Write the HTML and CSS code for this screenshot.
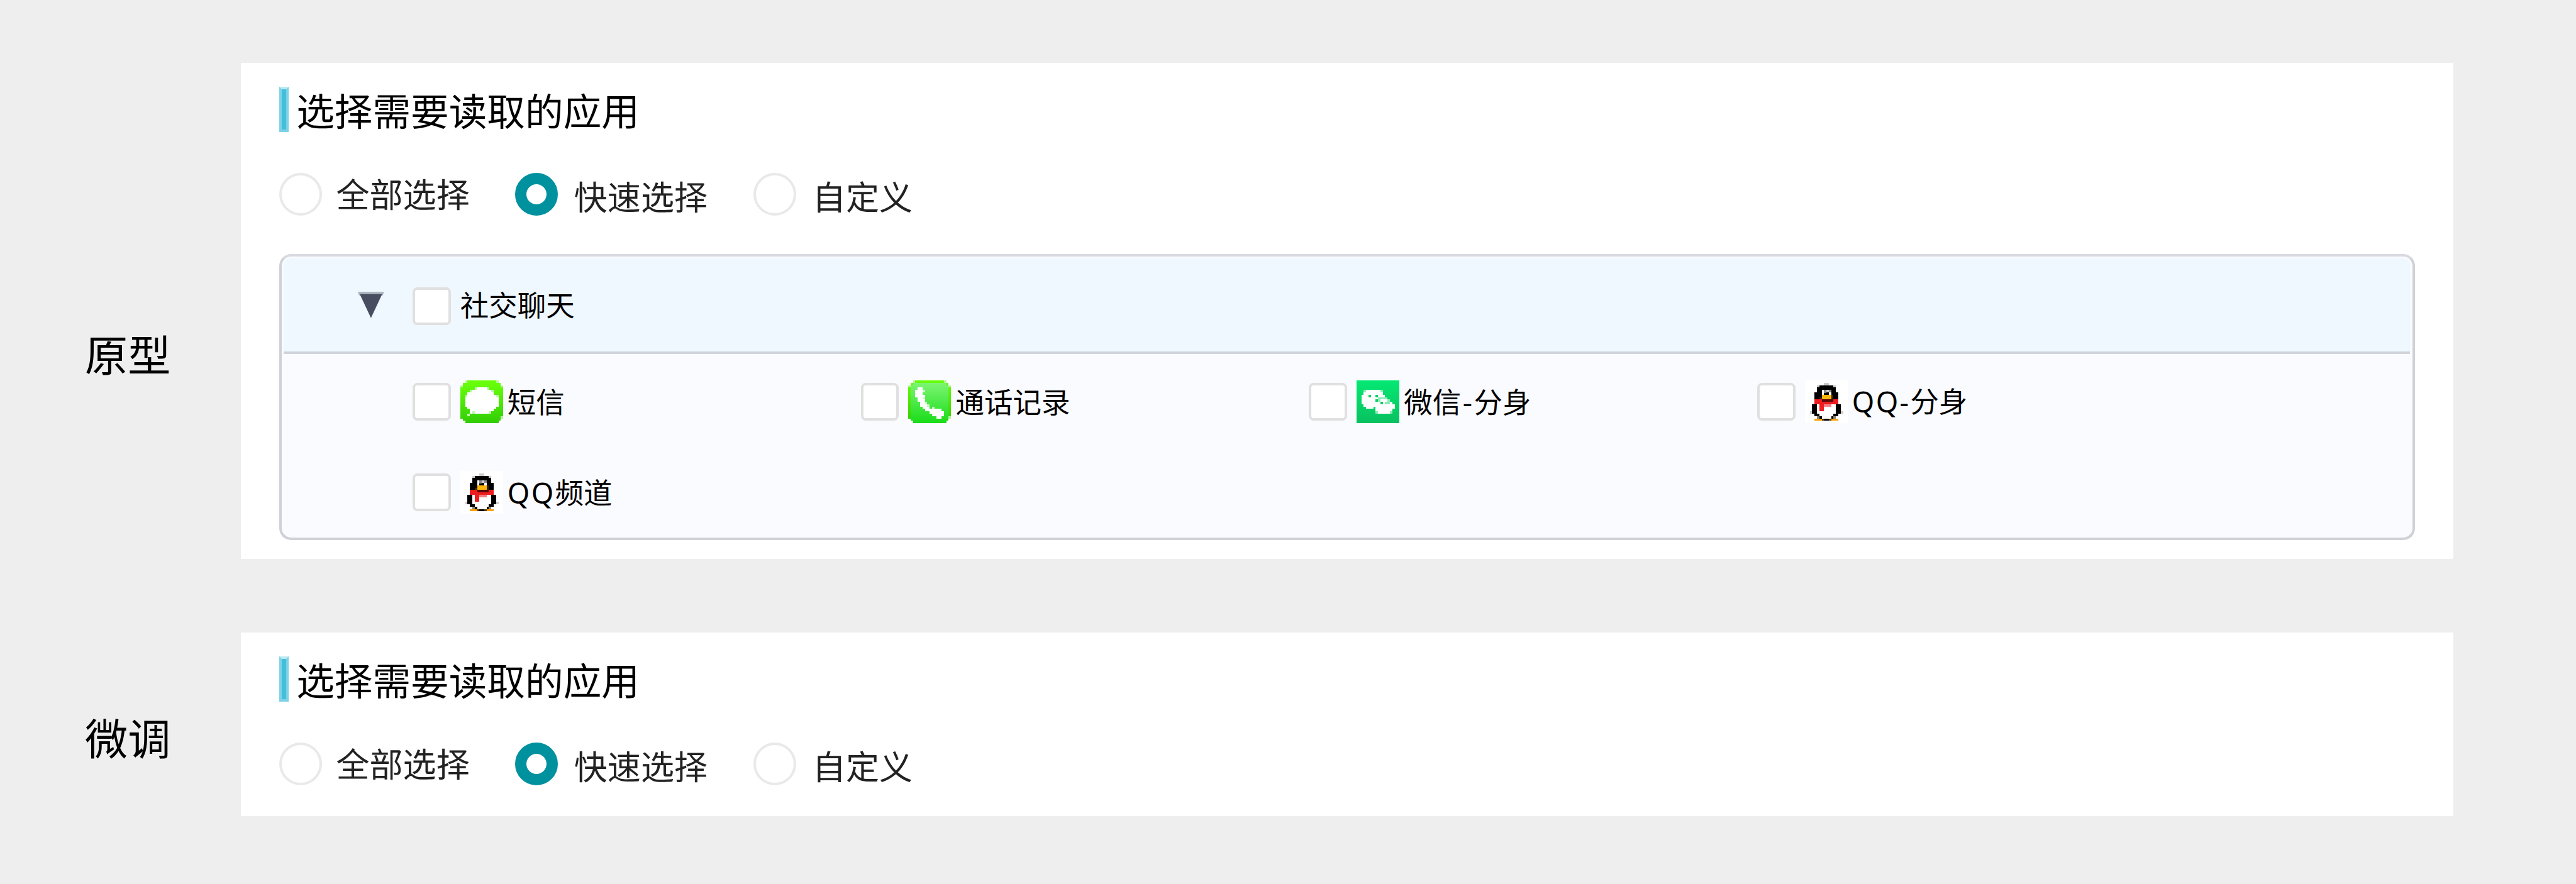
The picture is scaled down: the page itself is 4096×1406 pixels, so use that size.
FILE: index.html
```html
<!DOCTYPE html>
<html lang="zh-CN">
<head>
  <meta charset="UTF-8">
  <meta name="viewport" content="width=device-width, initial-scale=1.0">
  <title>选择需要读取的应用</title>
  <link rel="stylesheet" href="styles.css">
</head>
<body>
<svg class="symbols" aria-hidden="true">
  <symbol id="qq" viewBox="0 0 18 18">
    <path fill="#fff" d="M0 0h18v18H0z"/>
    <path fill="#ccc" d="M8 1h2v1H8zM2 13h1v1H2zM15 13h1v1h-1zM5 3h1v-1H5zM12 2h1v1h-1z"/>
    <path fill="#000" d="M6 2h6v1h1v2h1v3H4V5h1V3h1zM4 10h1v4h1v1h1v1H5v-1H4v-1H3v-4zM13 10h2v4h-1v1h-1v1h-2v-1h1v-1h1zM7 16h4v1H7z"/>
    <path fill="#fff" d="M7 4h1v2H7zM10 5h1v1h-1z"/>
    <path fill="#888" d="M8 4h1v1H8zM10 4h1v1h-1zM9 5h-1v.4h1z"/>
    <path fill="#ccc" d="M9 4h1v1H9z"/>
    <path fill="#fdb60d" d="M7 6h4v2H7z"/>
    <path fill="#3a2605" d="M6 7h1v1H6zM11 6h1v2h-1z"/>
    <path fill="#ec1c1f" d="M4 8h10v2H4zM6 10h2v3H6z"/>
    <path fill="#5a0808" d="M7 8h5v1H7z"/>
    <path fill="#f47f82" d="M8 10h3v1H8z"/>
    <path fill="#8a8270" d="M5 15h1v1H5zM12 15h1v1h-1z"/>
    <path fill="#fca00a" d="M4 16h3v1H4zM11 16h3v1h-3z"/>
    <path fill="#5c3a06" d="M7 16h1v1H7zM10 16h1v1h-1z"/>
  </symbol>
</svg>

<section class="row row-full">
  <h2 class="row-name">原型</h2>
  <div class="panel">
    <h1 class="title">选择需要读取的应用</h1>
    <div class="modes">
      <label class="mode"><input type="radio" name="mode1"><span>全部选择</span></label>
      <label class="mode lower"><input type="radio" name="mode1" checked><span>快速选择</span></label>
      <label class="mode lower"><input type="radio" name="mode1"><span>自定义</span></label>
    </div>
    <div class="group">
      <div class="group-header">
        <svg class="arrow" viewBox="0 0 11 11"><path fill="#adb7c0" d="M0 0h11l-.5 1.5H.5z"/><path fill="#484d60" d="M.8 1h9.4L5.5 11z"/></svg>
        <label class="check"><input type="checkbox"><span>社交聊天</span></label>
      </div>
      <div class="apps">
        <label class="app">
          <input type="checkbox">
          <svg class="icon" viewBox="0 0 18 18">
            <defs>
              <linearGradient id="sms" x1="0" y1="0" x2="0" y2="1"><stop offset="0.05" stop-color="#69ff0a"/><stop offset="1" stop-color="#30cd05"/></linearGradient>
            </defs>
            <path fill="#fff" d="M0 0h18v18H0z"/>
            <path fill="#b5f59a" d="M2 0h14v1h1v1h1v14h-1v1h-1v1H2v-1H1v-1H0V2h1V1h1z"/>
            <path fill="url(#sms)" d="M3 0h12v1h2v2h1v12h-1v2h-1v1H2v-1H1v-1H0V3h1V1h2z"/>
            <path fill="#c2f5b0" d="M6 3h6v1H6zM4 4h10v1H4zM2 6h14v1H2zM5 13h8v1H5zM3 14h1v1H3z"/>
            <path fill="#fff" d="M7 3h4v1h2v1h1v1h1v1h1v4h-1v1h-1v1h-2v1H6v-1H5v1H4v-2H3v-1H2V7h1V5h2V4h2z"/>
          </svg>
          <span>短信</span>
        </label>
        <label class="app">
          <input type="checkbox">
          <svg class="icon" viewBox="0 0 18 18">
            <defs>
              <linearGradient id="edge" x1="0" y1="0" x2="0" y2="1"><stop offset="0" stop-color="#69ff0a"/><stop offset="1" stop-color="#30cd05"/></linearGradient>
              <linearGradient id="call" x1="0" y1="0" x2="0" y2="1"><stop offset="0" stop-color="#7df573"/><stop offset="1" stop-color="#18dc18"/></linearGradient>
            </defs>
            <path fill="#fff" d="M0 0h18v18H0z"/>
            <path fill="#b5f59a" d="M2 0h14v1h1v1h1v14h-1v1h-1v1H2v-1H1v-1H0V2h1V1h1z"/>
            <path fill="url(#edge)" d="M3 0h12v1h2v2h1v12h-1v2h-1v1H2v-1H1v-1H0V3h1V1h2z"/>
            <path fill="url(#call)" d="M2 1h14v1h1v14h-1v2H2v-1H1V2h1z"/>
            <path fill="#c8f7c5" d="M6 4h1v1H6zM6 7h1v1H6zM4 8h1v1H4zM7 9h1v1H7zM8 10h1v1H8zM10 11h1v1h-1zM11 14h1v1h-1z"/>
            <path fill="#fff" d="M4 3h2v3h1v1h-1v1h1v1h0v1h1v1h1v1h1v0h3v0h1v1h1v2h-1v1h-2v-1h-2v-1H9v-1H7v-1H6v-1H5V9H4V7H3V4h1z"/>
          </svg>
          <span>通话记录</span>
        </label>
        <label class="app">
          <input type="checkbox">
          <svg class="icon" viewBox="0 0 18 18">
            <defs>
              <linearGradient id="wx" x1="0" y1="0" x2="0" y2="1"><stop offset="0" stop-color="#04e872"/><stop offset="1" stop-color="#09c160"/></linearGradient>
            </defs>
            <path fill="url(#wx)" d="M0 0h18v18H0z"/>
            <path fill="#8eebb6" d="M3 4h8v2h1v1h1v1H2V6h1zM8 8h6v1h1v1H8zM3 10h1v1H3zM8 12h1v2H8zM14 13h1v1h-1z"/>
            <path fill="#fff" d="M4 4h6v1h1v1h1v1h-3v1H8v3H7v1H4v-1H3v-1H2V6h1V5h1z"/>
            <path fill="#fff" d="M10 8h3v1h2v1h1v2h-1v1h-1v1H9v-1H8V9h2z"/>
            <path fill="#8eebb6" d="M12 9h2v1h-2z"/>
            <path fill="#0bcf62" d="M5 6h1v1H5zM8 6h1v1H8zM8 8h1v1H8zM10 9h1v1h-1z"/>
          </svg>
          <span>微信<span class="dash">-</span>分身</span>
        </label>
        <label class="app">
          <input type="checkbox">
          <svg class="icon"><use href="#qq"/></svg>
          <span><span class="latin">QQ-</span>分身</span>
        </label>
        <label class="app app-low">
          <input type="checkbox">
          <svg class="icon"><use href="#qq"/></svg>
          <span><span class="latin">QQ</span>频道</span>
        </label>
      </div>
    </div>
  </div>
</section>

<section class="row row-short">
  <h2 class="row-name">微调</h2>
  <div class="panel">
    <h1 class="title">选择需要读取的应用</h1>
    <div class="modes">
      <label class="mode"><input type="radio" name="mode2"><span>全部选择</span></label>
      <label class="mode lower"><input type="radio" name="mode2" checked><span>快速选择</span></label>
      <label class="mode lower"><input type="radio" name="mode2"><span>自定义</span></label>
    </div>
  </div>
</section>
</body>
</html>
```
FILE: styles.css
```css
*,
*::before {
  box-sizing: border-box;
}

/* 1rem is one unit of the layout */
html {
  font-size: 3.79084px;
}

body {
  margin: 0;
  padding-top: 26.5rem;
  font-family: "Noto Sans CJK SC", sans-serif;
  font-size: 12rem;
  font-weight: 400;
  line-height: 1;
  color: #000;
  background-color: #eee;
  overflow: hidden;
}

.symbols {
  display: none;
}

.row {
  display: grid;
  grid-template-columns: 101rem 928rem;
}

.row-full {
  grid-template-rows: 208rem;
  margin-bottom: 31rem;
}

.row-short {
  grid-template-rows: 77rem;
}

.row-name {
  margin: 0;
  padding-left: 35.6rem;
  font-size: 18rem;
  font-weight: 400;
  line-height: 18rem;
}

.row-full .row-name {
  padding-top: 112.7rem;
}

.row-short .row-name {
  padding-top: 34.7rem;
}

.panel {
  padding: 10rem 16rem 8rem;
  background-color: #fff;
}

.title {
  display: flex;
  align-items: center;
  gap: 3.3rem;
  height: 19rem;
  margin: 0 0 17rem;
  font-size: 16rem;
  font-weight: 400;
}

.title::before {
  content: "";
  width: 4rem;
  height: 19rem;
  border: solid #7dd2e5;
  border-width: 4px;
  border-top-color: #bfe9f2;
  background-color: #43bfdb;
}

input {
  appearance: none;
  flex: none;
  margin: 0;
  background-color: #fff;
}

.modes {
  display: grid;
  grid-template-columns: 99rem 100rem auto;
  height: 18rem;
  margin-bottom: 16rem;
  font-size: 14rem;
  color: #222;
}

.mode {
  display: flex;
  align-items: center;
  gap: 6rem;
}

.mode span {
  margin-top: -1.3rem;
}

.mode.lower {
  gap: 6.8rem;
}

.mode.lower span {
  margin-top: 0.6rem;
}

input[type="radio"] {
  width: 18rem;
  height: 18rem;
  border: 4px solid #e9e9e9;
  border-radius: 50%;
}

input[type="radio"]:checked {
  border: 5rem solid #00919e;
}

input[type="checkbox"] {
  width: 16rem;
  height: 16rem;
  border: 4px solid #e0e0e0;
  border-radius: 2rem;
}

.group {
  height: 120rem;
  padding: 1rem 1rem 0;
  border: 4px solid #ced1d6;
  border-top-color: #d8dadf;
  border-radius: 5rem;
  background-color: #fafbff;
}

.group-header {
  display: flex;
  align-items: center;
  gap: 12rem;
  height: 40rem;
  padding-left: 31rem;
  border-bottom: 4px solid #d0d4da;
  border-radius: 3rem 3rem 0 0;
  background-color: #eff7ff;
}

.arrow {
  width: 11rem;
  height: 11rem;
}

.check {
  display: flex;
  align-items: center;
  gap: 4rem;
}

.check input {
  margin-top: 1rem;
}

.check span {
  margin-top: -1rem;
}

.apps {
  display: grid;
  grid-template-columns: repeat(4, 188rem);
  grid-auto-rows: 18rem;
  row-gap: 20rem;
  padding: 11rem 0 0 54rem;
}

.app {
  display: flex;
  align-items: center;
}

.app > span {
  margin-top: -0.5rem;
  white-space: nowrap;
}

.app-low > span {
  margin-top: 0;
}

.icon {
  width: 18rem;
  height: 18rem;
  margin: 0 1.8rem 0 4rem;
  shape-rendering: crispEdges;
}

.latin {
  font-family: "Noto Sans", sans-serif;
  letter-spacing: 0.6rem;
}

.dash {
  margin: 0 0.6rem;
}
```
